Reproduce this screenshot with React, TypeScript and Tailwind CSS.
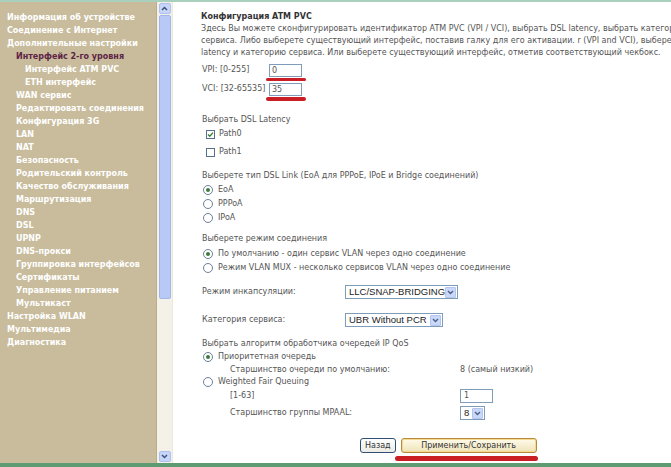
import React from "react";

const menu: { label: string; indent: string; active?: boolean }[] = [
  { label: "Информация об устройстве", indent: "pl-[7px]" },
  { label: "Соединение с Интернет", indent: "pl-[7px]" },
  { label: "Дополнительные настройки", indent: "pl-[7px]" },
  { label: "Интерфейс 2-го уровня", indent: "pl-[16px]", active: true },
  { label: "Интерфейс ATM PVC", indent: "pl-[25px]" },
  { label: "ETH интерфейс", indent: "pl-[25px]" },
  { label: "WAN сервис", indent: "pl-[16px]" },
  { label: "Редактировать соединения", indent: "pl-[16px]" },
  { label: "Конфигурация 3G", indent: "pl-[16px]" },
  { label: "LAN", indent: "pl-[16px]" },
  { label: "NAT", indent: "pl-[16px]" },
  { label: "Безопасность", indent: "pl-[16px]" },
  { label: "Родительский контроль", indent: "pl-[16px]" },
  { label: "Качество обслуживания", indent: "pl-[16px]" },
  { label: "Маршрутизация", indent: "pl-[16px]" },
  { label: "DNS", indent: "pl-[16px]" },
  { label: "DSL", indent: "pl-[16px]" },
  { label: "UPNP", indent: "pl-[16px]" },
  { label: "DNS-прокси", indent: "pl-[16px]" },
  { label: "Группировка интерфейсов", indent: "pl-[16px]" },
  { label: "Сертификаты", indent: "pl-[16px]" },
  { label: "Управление питанием", indent: "pl-[16px]" },
  { label: "Мультикаст", indent: "pl-[16px]" },
  { label: "Настройка WLAN", indent: "pl-[7px]" },
  { label: "Мультимедиа", indent: "pl-[7px]" },
  { label: "Диагностика", indent: "pl-[7px]" },
];

function Radio({ checked }: { checked?: boolean }) {
  return (
    <span className="w-[10px] h-[10px] rounded-full border border-[#6a8099] bg-white flex items-center justify-center shrink-0">
      {checked && <span className="w-[4px] h-[4px] rounded-full bg-[#3b7d3b]" />}
    </span>
  );
}

function Check({ checked }: { checked?: boolean }) {
  return (
    <span className="w-[9px] h-[9px] border border-[#56718d] bg-white flex items-center justify-center shrink-0">
      {checked && (
        <svg width="7" height="7" viewBox="0 0 7 7">
          <path d="M1 3.5 L2.8 5.3 L6 1.6" stroke="#3b7d3b" strokeWidth="1.4" fill="none" />
        </svg>
      )}
    </span>
  );
}

function Arrow() {
  return (
    <span className="w-[11px] h-[11px] bg-[#c9d7fb] border border-[#b3c4ef] rounded-[1px] flex items-center justify-center shrink-0">
      <svg width="7" height="5" viewBox="0 0 7 5">
        <path d="M1 1 L3.5 3.5 L6 1" stroke="#4d6185" strokeWidth="1.4" fill="none" />
      </svg>
    </span>
  );
}

function Select({ value, width }: { value: string; width: string }) {
  return (
    <div className={`${width} h-[14px] border border-[#7f9db9] bg-white flex items-center justify-between pl-[3px] pr-[1px] font-['Liberation_Sans',Arial,sans-serif] text-[9.5px] text-[#222] whitespace-nowrap`}>
      <span>{value}</span>
      <Arrow />
    </div>
  );
}

function ScrollArrow({ up }: { up?: boolean }) {
  return (
    <div className="w-[12px] h-[11px] bg-[#c6d5fa] border border-[#aebff0] rounded-[2px] flex items-center justify-center">
      <svg width="7" height="5" viewBox="0 0 7 5">
        <path d={up ? "M1 4 L3.5 1.5 L6 4" : "M1 1 L3.5 3.5 L6 1"} stroke="#3f5375" strokeWidth="1.5" fill="none" />
      </svg>
    </div>
  );
}

export default function App() {
  return (
    <div className="w-[671px] h-[467px] flex flex-col overflow-hidden bg-white font-['DejaVu_Sans',Verdana,sans-serif]">
      <div className="h-[2px] bg-[#a9d0bd]" />
      <div className="flex-1 flex min-h-0">
        {/* sidebar */}
        <div className="w-[157px] bg-[#c8bc9c] border-r border-[#b9ad8c] pt-[9px]">
          {menu.map((m) => (
            <div
              key={m.label}
              className={`h-[13px] leading-[13px] text-[8px] font-bold whitespace-nowrap ${m.indent} ${
                m.active ? "text-[#5e2346]" : "text-white"
              }`}
            >
              {m.label}
            </div>
          ))}
        </div>

        {/* scrollbar */}
        <div className="w-[16px] bg-[#f4f2e8] flex flex-col items-center pt-[1px] pb-[1px] border-r border-[#ece9dc]">
          <ScrollArrow up />
          <div className="w-[12px] h-[284px] mt-[1px] bg-[#b9c9f6] border border-[#a2b6ea] rounded-[2px]" />
          <div className="flex-1" />
          <ScrollArrow />
        </div>

        {/* content */}
        <div className="flex-1 min-w-0 overflow-hidden pl-[28px] pt-[9px] text-[8px] text-[#555]">
          <div className="h-[12px] leading-[12px] font-bold text-[#333]">Конфигурация ATM PVC</div>
          <div className="whitespace-nowrap leading-[12px]">
            <div>Здесь Вы можете сконфигурировать идентификатор ATM PVC (VPI / VCI), выбрать DSL latency, выбрать категорию</div>
            <div>сервиса. Либо выберете существующий интерфейс, поставив галку для его активации. r (VPI and VCI), выберете DSL</div>
            <div>latency и категорию сервиса. Или выберете существующий интерфейс, отметив соответствующий чекбокс.</div>
          </div>

          <div className="mt-[4px] h-[14px] flex items-center">
            <span className="w-[68px] pl-[1px]">VPI: [0-255]</span>
            <div className="w-[33px] h-[13px] border border-[#7f9db9] bg-white pl-[2px] leading-[11px]">0</div>
          </div>
          <div className="mt-[1px] ml-[65px] w-[40px] h-[3px] rounded-full bg-[#c81e24]" />
          <div className="mt-[1px] h-[14px] flex items-center">
            <span className="w-[68px] pl-[1px]">VCI: [32-65535]</span>
            <div className="w-[33px] h-[13px] border border-[#7f9db9] bg-white pl-[2px] leading-[11px]">35</div>
          </div>
          <div className="mt-[1px] ml-[65px] w-[40px] h-[4px] rounded-full bg-[#c81e24]" />

          <div className="mt-[13px] h-[12px] leading-[12px] pl-[1px]">Выбрать DSL Latency</div>
          <div className="mt-[1px] h-[14px] flex items-center gap-[4px] pl-[5px]">
            <Check checked />
            <span>Path0</span>
          </div>
          <div className="mt-[4px] h-[14px] flex items-center gap-[4px] pl-[5px]">
            <Check />
            <span>Path1</span>
          </div>

          <div className="mt-[11px] h-[12px] leading-[12px] pl-[1px]">Выберете тип DSL Link (EoA для PPPoE, IPoE и Bridge соединений)</div>
          {["EoA", "PPPoA", "IPoA"].map((l, i) => (
            <div key={l} className={`${i === 0 ? "mt-[1px]" : ""} h-[14px] flex items-center gap-[5px] pl-[2px]`}>
              <Radio checked={i === 0} />
              <span>{l}</span>
            </div>
          ))}

          <div className="mt-[8px] h-[12px] leading-[12px] pl-[1px]">Выберете режим соединения</div>
          <div className="mt-[2px] h-[14px] flex items-center gap-[5px] pl-[2px]">
            <Radio checked />
            <span>По умолчанию - один сервис VLAN через одно соединение</span>
          </div>
          <div className="h-[13px] flex items-center gap-[5px] pl-[2px]">
            <Radio />
            <span>Режим VLAN MUX - несколько сервисов VLAN через одно соединение</span>
          </div>

          <div className="mt-[11px] h-[14px] flex items-center">
            <span className="w-[144px] pl-[1px]">Режим инкапсуляции:</span>
            <Select value="LLC/SNAP-BRIDGING" width="w-[113px]" />
          </div>
          <div className="mt-[14px] h-[14px] flex items-center">
            <span className="w-[144px] pl-[1px]">Категория сервиса:</span>
            <Select value="UBR Without PCR" width="w-[98px]" />
          </div>

          <div className="mt-[11px] h-[12px] leading-[12px] pl-[1px]">Выбрать алгоритм обработчика очередей IP QoS</div>
          <div className="h-[14px] flex items-center gap-[5px] pl-[2px]">
            <Radio checked />
            <span>Приоритетная очередь</span>
          </div>
          <div className="h-[12px] flex items-center pl-[29px]">
            <span className="w-[230px]">Старшинство очереди по умолчанию:</span>
            <span>8 (самый низкий)</span>
          </div>
          <div className="h-[12px] flex items-center gap-[5px] pl-[2px]">
            <Radio />
            <span>Weighted Fair Queuing</span>
          </div>
          <div className="mt-[1px] h-[14px] flex items-center pl-[29px]">
            <span className="w-[230px]">[1-63]</span>
            <div className="w-[33px] h-[14px] border border-[#7f9db9] bg-white pl-[3px] leading-[12px]">1</div>
          </div>
          <div className="mt-[3px] h-[14px] flex items-center pl-[29px]">
            <span className="w-[230px]">Старшинство группы MPAAL:</span>
            <div className="w-[25px] h-[14px] border border-[#7f9db9] bg-white flex items-center justify-between pl-[3px] pr-[1px] font-['Liberation_Sans',Arial,sans-serif] text-[9.5px] text-[#222]">
              <span>8</span>
              <Arrow />
            </div>
          </div>

          <div className="mt-[18px] h-[15px] flex items-center pl-[159px] gap-[5px]">
            <button className="h-[15px] px-[4px] border border-[#2f4f75] rounded-[3px] bg-gradient-to-b from-white to-[#ecebe4] text-[8px] text-[#333] leading-[13px]">
              Назад
            </button>
            <button className="w-[136px] h-[15px] border border-[#b68a3c] rounded-[3px] bg-gradient-to-b from-[#fffbea] to-[#efe3b8] text-[8px] text-[#333] leading-[13px] shadow-[inset_0_0_0_1px_#f6d98e]">
              Применить/Сохранить
            </button>
          </div>
          <div className="mt-[3px] ml-[194px] w-[143px] h-[5px] rounded-full bg-[#c81e24]" />
        </div>
      </div>
      <div className="h-[4px] bg-[#5f9b72]" />
    </div>
  );
}
